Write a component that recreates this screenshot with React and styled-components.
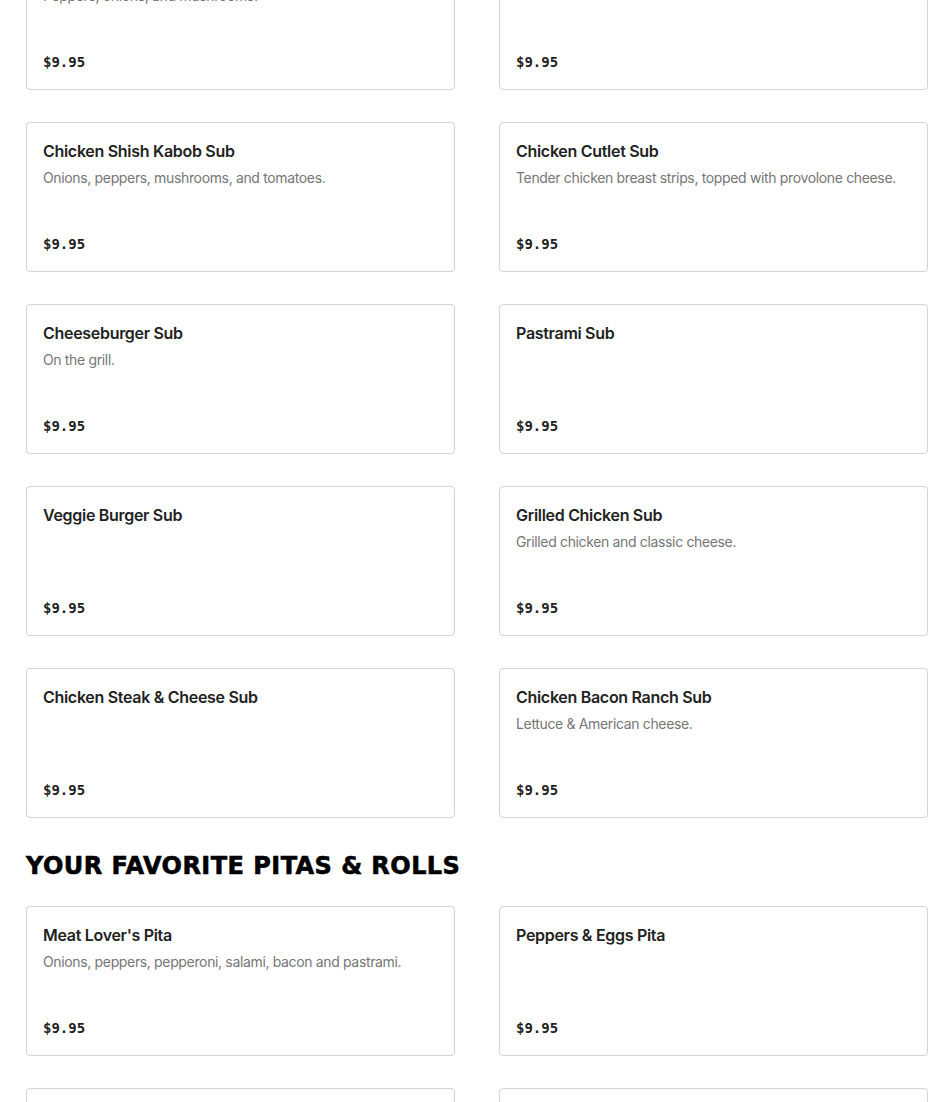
import React from "react";
import styled, { createGlobalStyle } from "styled-components";

const GlobalStyle = createGlobalStyle`
  html, body { margin: 0; padding: 0; background: #fff; }
  body { font-family: Inter, "Noto Sans", sans-serif; color: #222; overflow: hidden; }
`;

const Page = styled.main`
  margin-top: -60px;
  padding: 0 22px 0 26px;
`;

const Section = styled.section`
  display: flex;
  flex-direction: column;
`;

const SectionTitle = styled.h2`
  margin: 32px 0 24px;
  font-family: "DejaVu Sans", Inter, sans-serif;
  font-weight: 700;
  font-size: 24px;
  line-height: 32px;
  letter-spacing: 0.45px;
  color: #000;
  -webkit-text-stroke: 0.6px #000;
  text-transform: uppercase;
`;

const Grid = styled.div`
  display: grid;
  grid-template-columns: 1fr 1fr;
  column-gap: 44px;
  row-gap: 32px;
`;

const Card = styled.article`
  box-sizing: border-box;
  height: 150px;
  display: flex;
  flex-direction: column;
  padding: 16px 16px 17px;
  border: 1px solid #d3d3d3;
  border-radius: 4px;
  background: #fff;
`;

const Name = styled.h3`
  margin: 0;
  font-size: 16px;
  line-height: 24px;
  font-weight: 600;
  letter-spacing: -0.3px;
  color: #222;
`;

const Desc = styled.p`
  margin: 5px 0 0;
  font-size: 14px;
  line-height: 20px;
  letter-spacing: -0.35px;
  color: #767676;
`;

const Price = styled.span`
  margin-top: auto;
  font-family: "DejaVu Sans Mono", "Liberation Mono", monospace;
  font-weight: 700;
  font-size: 14px;
  line-height: 20px;
  color: #222;
`;

const subs = [
  { name: "Steak Bomb Sub", desc: "Peppers, onions, and mushrooms." },
  { name: "Steak & Cheese Sub" },
  { name: "Chicken Shish Kabob Sub", desc: "Onions, peppers, mushrooms, and tomatoes." },
  { name: "Chicken Cutlet Sub", desc: "Tender chicken breast strips, topped with provolone cheese." },
  { name: "Cheeseburger Sub", desc: "On the grill." },
  { name: "Pastrami Sub" },
  { name: "Veggie Burger Sub" },
  { name: "Grilled Chicken Sub", desc: "Grilled chicken and classic cheese." },
  { name: "Chicken Steak & Cheese Sub" },
  { name: "Chicken Bacon Ranch Sub", desc: "Lettuce & American cheese." },
];

const pitas = [
  { name: "Meat Lover's Pita", desc: "Onions, peppers, pepperoni, salami, bacon and pastrami." },
  { name: "Peppers & Eggs Pita" },
  { name: "Chicken Kabob Pita", desc: "Lettuce, tomatoes, and onions." },
  { name: "Steak Tips Pita", desc: "Lettuce, tomatoes, and onions." },
];

function ItemCard({ item }) {
  return (
    <Card>
      <Name>{item.name}</Name>
      {item.desc && <Desc>{item.desc}</Desc>}
      <Price>$9.95</Price>
    </Card>
  );
}

export default function App() {
  return (
    <>
      <GlobalStyle />
      <Page>
        <Section>
          <Grid>
            {subs.map((it) => (
              <ItemCard key={it.name} item={it} />
            ))}
          </Grid>
        </Section>
        <Section>
          <SectionTitle>Your Favorite Pitas &amp; Rolls</SectionTitle>
          <Grid>
            {pitas.map((it) => (
              <ItemCard key={it.name} item={it} />
            ))}
          </Grid>
        </Section>
      </Page>
    </>
  );
}
